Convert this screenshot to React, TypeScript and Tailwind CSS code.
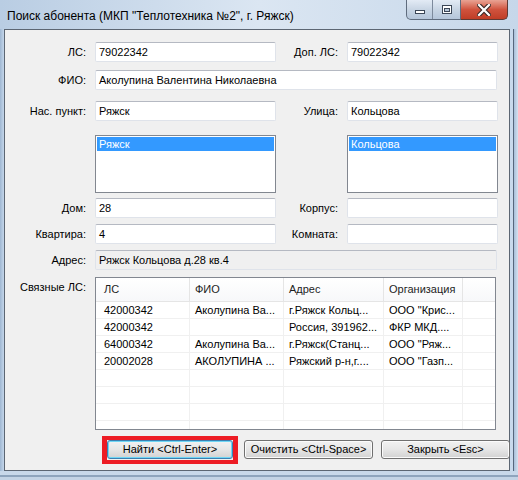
import React from 'react';

const ROWS = [
  { ls: '42000342', fio: 'Аколупина Ва...', addr: 'г.Ряжск Кольц...', org: 'ООО "Крис...' },
  { ls: '42000342', fio: '', addr: 'Россия, 391962...', org: 'ФКР МКД....' },
  { ls: '64000342', fio: 'Аколупина Ва...', addr: 'г.Ряжск(Станц...', org: 'ООО "Ряж...' },
  { ls: '20002028', fio: 'АКОЛУПИНА ...', addr: 'Ряжский р-н,г....', org: 'ООО "Газп...' },
  { ls: '', fio: '', addr: '', org: '' },
  { ls: '', fio: '', addr: '', org: '' },
  { ls: '', fio: '', addr: '', org: '' },
  { ls: '', fio: '', addr: '', org: '' },
];

function Label({ w, children }: { w: string; children: React.ReactNode }) {
  return <div className={`${w} shrink-0 text-right leading-none`}>{children}</div>;
}

function Field({ w, value, readOnly }: { w: string; value?: string; readOnly?: boolean }) {
  return (
    <div
      className={`${w} ml-[9px] h-[20px] shrink-0 flex items-center pl-[3px] rounded-[2px] border border-[#dfe3ea] border-t-[#b5b9c2] ${
        readOnly ? 'bg-[#f0f0f0]' : 'bg-white'
      }`}
    >
      {value}
    </div>
  );
}

function ListBox({ w, item }: { w: string; item: string }) {
  return (
    <div className={`${w} ml-[9px] h-[58px] shrink-0 border border-[#828790] bg-white p-px`}>
      <div className="h-[14px] bg-[#3399ff] pl-[2px] text-white leading-[14px]">{item}</div>
    </div>
  );
}

function CaptionButtons() {
  return (
    <div className="flex mr-[10px]">
      <div className="flex h-[20px] overflow-hidden rounded-bl-[5px] border border-t-0 border-[#5f6c7e] bg-gradient-to-b from-[#e3ebf5] via-[#c8d5e4] to-[#b5c6da]">
        <div className="w-[26px] flex items-center justify-center border-r border-[#7d8a9c]">
          <svg width="12" height="12" viewBox="0 0 12 12">
            <rect x="1.5" y="6.5" width="9" height="3" fill="#fff" stroke="#3b4656" />
          </svg>
        </div>
        <div className="w-[27px] flex items-center justify-center">
          <svg width="12" height="10" viewBox="0 0 12 10">
            <rect x="1.5" y="0.5" width="9" height="8" fill="#fff" stroke="#3b4656" />
            <rect x="3.5" y="3.5" width="5" height="3" fill="#b8c7d8" stroke="#3b4656" />
          </svg>
        </div>
      </div>
      <div className="w-[47px] h-[20px] flex items-center justify-center rounded-br-[5px] border border-t-0 border-l-0 border-[#5f3a35] bg-gradient-to-b from-[#e8a394] via-[#d0533e] to-[#c03d26]">
        <svg width="14" height="12" viewBox="0 0 14 12">
          <path d="M2 1 L12 11 M12 1 L2 11" stroke="#3a2a28" strokeWidth="4.4" strokeLinecap="square" />
          <path d="M2 1 L12 11 M12 1 L2 11" stroke="#fff" strokeWidth="2.2" strokeLinecap="square" />
        </svg>
      </div>
    </div>
  );
}

function Btn({ w, children, def }: { w: string; children: React.ReactNode; def?: boolean }) {
  return (
    <div
      className={`${w} h-[19px] shrink-0 flex items-center justify-center rounded-[3px] border bg-gradient-to-b from-[#f2f2f2] via-[#e6e6e6] to-[#d2d2d2] ${
        def ? 'border-[#3c7fb1] shadow-[inset_0_0_0_1px_#6fd6f5]' : 'border-[#707070] shadow-[inset_0_0_0_1px_#fbfbfb]'
      }`}
    >
      {children}
    </div>
  );
}

export default function App() {
  return (
    <div className="w-[518px] h-[480px] overflow-hidden flex flex-col bg-gradient-to-r from-[#b9cde3] via-[#dbe6f2] to-[#c6d7ea] font-['Liberation_Sans',Arial,sans-serif] text-[11px] text-black">
      {/* caption */}
      <div className="h-[29px] shrink-0 flex items-start">
        <div className="pl-[7px] pt-[9px] text-[12px] leading-[14px] text-black">
          Поиск абонента (МКП "Теплотехника №2", г. Ряжск)
        </div>
        <div className="flex-1" />
        <CaptionButtons />
      </div>

      <div className="flex flex-1">
        <div className="w-[4px] shrink-0 bg-gradient-to-r from-[#9fb7d2] to-[#c4d6ea]" />
        {/* client area */}
        <div className="w-[506px] h-[442px] shrink-0 border border-[#5c6673] bg-[#f0f0f0] flex flex-col">
          <div className="flex items-center mt-[12px]">
            <Label w="w-[81px]">ЛС:</Label>
            <Field w="w-[181px]" value="79022342" />
            <Label w="w-[62px]">Доп. ЛС:</Label>
            <Field w="w-[151px]" value="79022342" />
          </div>
          <div className="flex items-center mt-[8px]">
            <Label w="w-[81px]">ФИО:</Label>
            <Field w="w-[402px]" value="Аколупина Валентина Николаевна" />
          </div>
          <div className="flex items-center mt-[11px]">
            <Label w="w-[81px]">Нас. пункт:</Label>
            <Field w="w-[181px]" value="Ряжск" />
            <Label w="w-[62px]">Улица:</Label>
            <Field w="w-[151px]" value="Кольцова" />
          </div>
          <div className="flex mt-[14px]">
            <div className="w-[81px] shrink-0" />
            <ListBox w="w-[181px]" item="Ряжск" />
            <div className="w-[62px] shrink-0" />
            <ListBox w="w-[151px]" item="Кольцова" />
          </div>
          <div className="flex items-center mt-[5px]">
            <Label w="w-[81px]">Дом:</Label>
            <Field w="w-[181px]" value="28" />
            <Label w="w-[62px]">Корпус:</Label>
            <Field w="w-[151px]" />
          </div>
          <div className="flex items-center mt-[6px]">
            <Label w="w-[81px]">Квартира:</Label>
            <Field w="w-[181px]" value="4" />
            <Label w="w-[62px]">Комната:</Label>
            <Field w="w-[151px]" />
          </div>
          <div className="flex items-center mt-[6px]">
            <Label w="w-[81px]">Адрес:</Label>
            <Field w="w-[402px]" value="Ряжск Кольцова д.28 кв.4" readOnly />
          </div>

          {/* linked accounts */}
          <div className="flex mt-[7px]">
            <div className="w-[81px] shrink-0 text-right pt-[2px]">Связные ЛС:</div>
            <div className="ml-[9px] w-[401px] h-[153px] shrink-0 border border-[#828790] bg-white overflow-hidden">
              <div className="flex h-[24px] border-b border-[#e5e5e5] bg-gradient-to-b from-white to-[#f7f8fa] text-[#1e1e1e]">
                <div className="w-[94px] shrink-0 flex items-center pl-[8px] border-r border-[#e5e5e5]">ЛС</div>
                <div className="w-[94px] shrink-0 flex items-center pl-[5px] border-r border-[#e5e5e5]">ФИО</div>
                <div className="w-[100px] shrink-0 flex items-center pl-[5px] border-r border-[#e5e5e5]">Адрес</div>
                <div className="w-[79px] shrink-0 flex items-center pl-[5px] border-r border-[#e5e5e5]">Организация</div>
                <div className="flex-1" />
              </div>
              {ROWS.map((r, i) => (
                <div key={i} className="flex h-[17px] border-b border-[#f0f0f0]">
                  <div className="w-[94px] shrink-0 pl-[8px] leading-[16px] whitespace-nowrap overflow-hidden border-r border-[#f0f0f0]">{r.ls}</div>
                  <div className="w-[94px] shrink-0 pl-[5px] leading-[16px] whitespace-nowrap overflow-hidden border-r border-[#f0f0f0]">{r.fio}</div>
                  <div className="w-[100px] shrink-0 pl-[5px] leading-[16px] whitespace-nowrap overflow-hidden border-r border-[#f0f0f0]">{r.addr}</div>
                  <div className="w-[79px] shrink-0 pl-[5px] leading-[16px] whitespace-nowrap overflow-hidden border-r border-[#f0f0f0]">{r.org}</div>
                  <div className="flex-1" />
                </div>
              ))}
            </div>
          </div>

          {/* buttons */}
          <div className="flex mt-[10px] ml-[102px]">
            <div className="relative">
              <Btn w="w-[126px]" def>
                Найти &lt;Ctrl-Enter&gt;
              </Btn>
              <div className="absolute -top-[4px] -bottom-[5px] -left-[5px] -right-[5px] border-[4px] border-x-[5px] border-[#ed1c24]" />
            </div>
            <div className="ml-[11px]">
              <Btn w="w-[129px]">Очистить &lt;Ctrl-Space&gt;</Btn>
            </div>
            <div className="ml-[8px]">
              <Btn w="w-[129px]">Закрыть &lt;Esc&gt;</Btn>
            </div>
          </div>
        </div>
        <div className="flex-1 flex">
          <div className="w-[3px] bg-[#c9daec]" />
          <div className="w-px bg-[#56677c]" />
          <div className="flex-1 bg-gradient-to-r from-[#a8bfd9] to-[#d5e2ef]" />
        </div>
      </div>
      <div className="h-[9px] shrink-0 flex flex-col">
        <div className="h-[4px] bg-[#c8d8ea]" />
        <div className="h-[2px] bg-[#8ea4bd]" />
        <div className="flex-1 bg-[#c3d3e5]" />
      </div>
    </div>
  );
}
